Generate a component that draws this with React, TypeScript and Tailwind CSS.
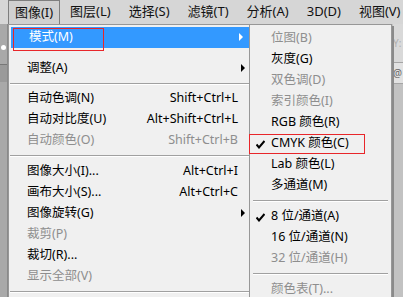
import React from 'react';

type Item =
  | { kind: 'item'; label: string; shortcut?: string; disabled?: boolean; arrow?: boolean; active?: boolean; checked?: boolean; boxed?: string }
  | { kind: 'sep'; h: string; blank?: boolean };

const font = { fontFamily: '"Noto Sans", "Noto Sans CJK SC", sans-serif' };

const mainItems: Item[] = [
  { kind: 'item', label: '模式(M)', arrow: true, active: true, boxed: 'left-[2px] top-[1px] w-[91px] h-[23px]' },
  { kind: 'sep', h: 'h-[10px]', blank: true },
  { kind: 'item', label: '调整(A)', arrow: true },
  { kind: 'sep', h: 'h-[9px]' },
  { kind: 'item', label: '自动色调(N)', shortcut: 'Shift+Ctrl+L' },
  { kind: 'item', label: '自动对比度(U)', shortcut: 'Alt+Shift+Ctrl+L' },
  { kind: 'item', label: '自动颜色(O)', shortcut: 'Shift+Ctrl+B', disabled: true },
  { kind: 'sep', h: 'h-[10px]' },
  { kind: 'item', label: '图像大小(I)...', shortcut: 'Alt+Ctrl+I' },
  { kind: 'item', label: '画布大小(S)...', shortcut: 'Alt+Ctrl+C' },
  { kind: 'item', label: '图像旋转(G)', arrow: true },
  { kind: 'item', label: '裁剪(P)', disabled: true },
  { kind: 'item', label: '裁切(R)...' },
  { kind: 'item', label: '显示全部(V)', disabled: true },
  { kind: 'sep', h: 'h-[9px]' },
];

const subItems: Item[] = [
  { kind: 'item', label: '位图(B)', disabled: true },
  { kind: 'item', label: '灰度(G)' },
  { kind: 'item', label: '双色调(D)', disabled: true },
  { kind: 'item', label: '索引颜色(I)', disabled: true },
  { kind: 'item', label: 'RGB 颜色(R)' },
  { kind: 'item', label: 'CMYK 颜色(C)', checked: true, boxed: '-left-[1px] top-[1px] w-[116px] h-[20px]' },
  { kind: 'item', label: 'Lab 颜色(L)' },
  { kind: 'item', label: '多通道(M)' },
  { kind: 'sep', h: 'h-[10px]' },
  { kind: 'item', label: '8 位/通道(A)', checked: true },
  { kind: 'item', label: '16 位/通道(N)' },
  { kind: 'item', label: '32 位/通道(H)', disabled: true },
  { kind: 'sep', h: 'h-[10px]' },
  { kind: 'item', label: '颜色表(T)...', disabled: true },
];

function Arrow({ white }: { white?: boolean }) {
  return (
    <svg width="5" height="8" viewBox="0 0 5 8" className="absolute right-[6px] top-[6px]">
      <path d="M0 0 L4 4 L0 8 Z" fill={white ? '#ffffff' : '#000000'} />
    </svg>
  );
}

function Check() {
  return (
    <svg width="9" height="9" viewBox="0 0 9 9" className="absolute left-[6px] top-[7px]">
      <path d="M0.5 4.5 L3 7.5 L8.5 1" stroke="#000" strokeWidth="2" fill="none" />
    </svg>
  );
}

function MenuRows({ items, textLeft, sepInset }: { items: Item[]; textLeft: string; sepInset: string }) {
  return (
    <>
      {items.map((it, i) => {
        if (it.kind === 'sep') {
          return (
            <div key={i} className={`${it.h} flex items-center ${sepInset}`}>
              {!it.blank && <div className="h-[2px] w-full border-t border-b border-t-[#a0a0a0] border-b-[#ffffff]" />}
            </div>
          );
        }
        const color = it.active ? 'text-white' : it.disabled ? 'text-[#8e8e8e]' : 'text-[#000]';
        return (
          <div
            key={i}
            className={`relative h-[21px] flex items-center ${it.active ? 'bg-[#3399ff] mx-[2px]' : ''} ${color}`}
          >
            {it.checked && <Check />}
            <span className={`${textLeft} whitespace-nowrap`}>{it.label}</span>
            {it.shortcut && (
              <span className="ml-auto mr-[14px] whitespace-nowrap">{it.shortcut}</span>
            )}
            {it.arrow && <Arrow white={it.active} />}
            {it.boxed && <div className={`absolute ${it.boxed} border border-[#e8262a]`} />}
          </div>
        );
      })}
    </>
  );
}

export default function App() {
  const bar = ['图层(L)', '选择(S)', '滤镜(T)', '分析(A)', '3D(D)', '视图(V)'];
  return (
    <div className="relative w-[403px] h-[297px] overflow-hidden flex flex-col bg-[#c2c2c2] text-[12.5px]" style={font}>
      {/* menu bar */}
      <div className="h-[24px] shrink-0 bg-[#d6d6d6] flex items-center pl-[8px] text-[13px] text-[#111]">
        <div className="h-[24px] w-[52px] flex items-center justify-center whitespace-nowrap border border-[#7e7e7e] border-b-0 bg-[#d0d0d0]">
          图像(I)
        </div>
        <div className="flex gap-[18px] ml-[10px]">
          {bar.map(b => (
            <span key={b} className="whitespace-nowrap">{b}</span>
          ))}
        </div>
      </div>

      {/* workspace behind the menus */}
      <div className="flex-1 flex">
        <div className="w-[8px] bg-[#a9a9a9] border-r border-[#8a8a8a] flex flex-col">
          <div className="mt-[21px] ml-[1px] w-[5px] h-[5px] rounded-full bg-white" />
          <div className="mt-[14px] h-[18px] bg-[#9a9a9a] border-t border-[#777]" />
        </div>
        <div className="flex-1" />
        <div className="w-[10px] flex flex-col">
          <div className="h-[38px] bg-[#d9d9d9] text-[#b0b0b0] text-[10px] pt-[12px]">Y:</div>
          <div className="h-[22px] bg-[#e2e2e2] border-y border-[#a5a5a5] text-[#666] text-[10px] leading-[20px]">@</div>
          <div className="flex-1 bg-[#c2c2c2]" />
        </div>
      </div>

      {/* main dropdown */}
      <div className="absolute left-[8px] top-[24px] w-[245px] h-[280px] bg-[#f0f0f0] border border-[#979797] pt-[2px]">
        <MenuRows items={mainItems} textLeft="pl-[18px]" sepInset="px-[1px]" />
      </div>

      {/* mode submenu */}
      <div className="absolute left-[249px] top-[24px] w-[143px] h-[280px] bg-[#f0f0f0] border border-[#979797] pt-[3px] shadow-[2px_2px_0_#8a8a8a]">
        <MenuRows items={subItems} textLeft="pl-[21px]" sepInset="px-[3px]" />
      </div>
    </div>
  );
}
